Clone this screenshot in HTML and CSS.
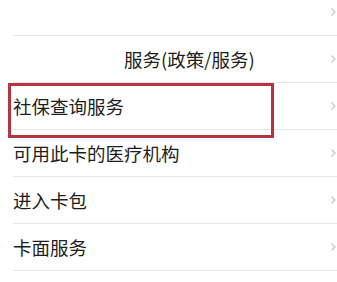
FILE: index.html
```html
<!DOCTYPE html>
<html lang="zh-CN">
<head>
<meta charset="utf-8">
<link rel="stylesheet" href="styles.css">
</head>
<body>
<div class="list">
  <div class="row first">
    <span class="label"></span>
    <svg class="chev" viewBox="0 0 6 10" width="6" height="10"><path d="M1.5 1.5 L5 5 L1.5 8.5" fill="none" stroke="#c4c4c4" stroke-width="1.1"/></svg>
  </div>
  <div class="row">
    <span class="label partial">服务(政策/服务)</span>
    <svg class="chev" viewBox="0 0 6 10" width="6" height="10"><path d="M1.5 1.5 L5 5 L1.5 8.5" fill="none" stroke="#c4c4c4" stroke-width="1.1"/></svg>
  </div>
  <div class="row highlighted">
    <span class="label">社保查询服务</span>
    <svg class="chev" viewBox="0 0 6 10" width="6" height="10"><path d="M1.5 1.5 L5 5 L1.5 8.5" fill="none" stroke="#c4c4c4" stroke-width="1.1"/></svg>
    <div class="mark"></div>
  </div>
  <div class="row">
    <span class="label">可用此卡的医疗机构</span>
    <svg class="chev" viewBox="0 0 6 10" width="6" height="10"><path d="M1.5 1.5 L5 5 L1.5 8.5" fill="none" stroke="#c4c4c4" stroke-width="1.1"/></svg>
  </div>
  <div class="row">
    <span class="label">进入卡包</span>
    <svg class="chev" viewBox="0 0 6 10" width="6" height="10"><path d="M1.5 1.5 L5 5 L1.5 8.5" fill="none" stroke="#c4c4c4" stroke-width="1.1"/></svg>
  </div>
  <div class="row">
    <span class="label">卡面服务</span>
    <svg class="chev" viewBox="0 0 6 10" width="6" height="10"><path d="M1.5 1.5 L5 5 L1.5 8.5" fill="none" stroke="#c4c4c4" stroke-width="1.1"/></svg>
  </div>
</div>
</body>
</html>
```
FILE: styles.css
```css
html, body {
  margin: 0;
  padding: 0;
  background: #ffffff;
  overflow: hidden;
}
body {
  width: 337px;
  height: 282px;
  font-family: "Noto Sans CJK SC", "Noto Sans", sans-serif;
  color: #1e1e1e;
}
.list {
  margin-top: -11px;
  margin-left: 13px;
}
.row {
  position: relative;
  height: 46px;
  border-bottom: 1px solid #e6e6e6;
  display: flex;
  align-items: center;
  justify-content: space-between;
  padding-right: 1px;
}
.label {
  font-size: 18.5px;
  line-height: 24px;
  white-space: nowrap;
}
.partial {
  margin-left: 111px;
}
.chev {
  flex: none;
}
.mark {
  position: absolute;
  left: -5px;
  top: 0;
  width: 260px;
  height: 49px;
  border: 3px solid #b8323f;
  pointer-events: none;
}
```
